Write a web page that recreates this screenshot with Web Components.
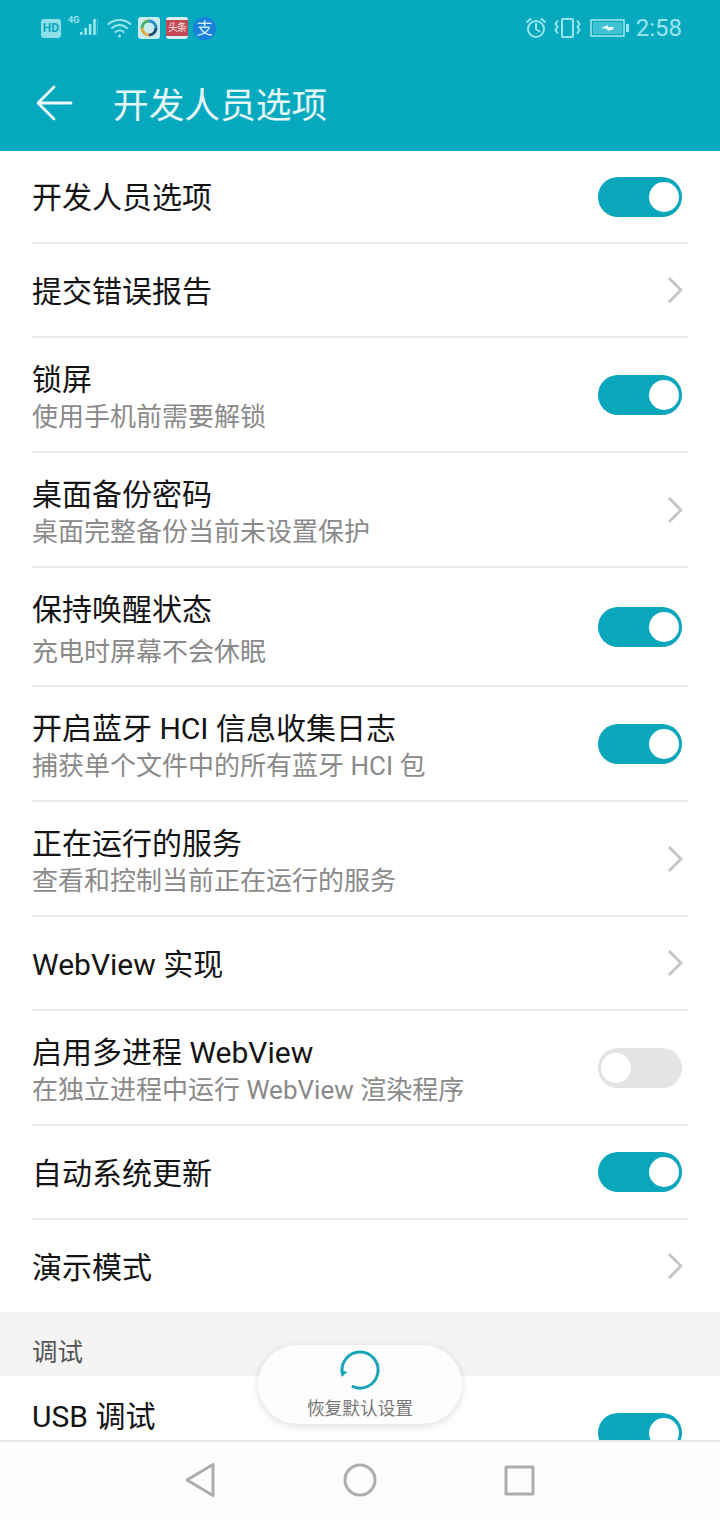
<!DOCTYPE html>
<html lang="zh">
<head>
<meta charset="utf-8">
<title>开发人员选项</title>
<style>
  html, body { margin: 0; padding: 0; background: #fff; }
  body { font-family: Roboto, "Noto Sans CJK SC", sans-serif; }
</style>
</head>
<body>
<settings-screen>
  <app-header slot="top">开发人员选项</app-header>

  <settings-row h="93"><span>开发人员选项</span><app-switch slot="end" on></app-switch></settings-row>
  <settings-row h="94"><span>提交错误报告</span><app-chevron slot="end"></app-chevron></settings-row>
  <settings-row h="115"><span>锁屏</span><span slot="sub">使用手机前需要解锁</span><app-switch slot="end" on></app-switch></settings-row>
  <settings-row h="115"><span>桌面备份密码</span><span slot="sub">桌面完整备份当前未设置保护</span><app-chevron slot="end"></app-chevron></settings-row>
  <settings-row h="119" gap="8" pad="7"><span>保持唤醒状态</span><span slot="sub">充电时屏幕不会休眠</span><app-switch slot="end" on></app-switch></settings-row>
  <settings-row h="115"><span>开启蓝牙 HCI 信息收集日志</span><span slot="sub">捕获单个文件中的所有蓝牙 HCI 包</span><app-switch slot="end" on></app-switch></settings-row>
  <settings-row h="115"><span>正在运行的服务</span><span slot="sub">查看和控制当前正在运行的服务</span><app-chevron slot="end"></app-chevron></settings-row>
  <settings-row h="94"><span>WebView 实现</span><app-chevron slot="end"></app-chevron></settings-row>
  <settings-row h="115"><span>启用多进程 WebView</span><span slot="sub">在独立进程中运行 WebView 渲染程序</span><app-switch slot="end"></app-switch></settings-row>
  <settings-row h="94"><span>自动系统更新</span><app-switch slot="end" on></app-switch></settings-row>
  <settings-row h="92" last><span>演示模式</span><app-chevron slot="end"></app-chevron></settings-row>
  <settings-section>调试</settings-section>
  <settings-row h="113" gap="0" pad="0" last><span>USB 调试</span><span slot="sub">&nbsp;</span><app-switch slot="end" on></app-switch></settings-row>

  <restore-button slot="float">恢复默认设置</restore-button>
  <nav-bar slot="bottom"></nav-bar>
</settings-screen>

<script>
class SettingsScreen extends HTMLElement {
  constructor() {
    super();
    this.attachShadow({ mode: "open" });
    this.shadowRoot.innerHTML = `
    <style>
      :host {
        display: flex;
        flex-direction: column;
        position: relative;
        width: 720px;
        height: 1520px;
        overflow: hidden;
        background: #fff;
      }
      .list {
        flex: 1;
        min-height: 0;
        overflow: hidden;
      }
    </style>
    <slot name="top"></slot>
    <div class="list"><slot></slot></div>
    <slot name="float"></slot>
    <slot name="bottom"></slot>
    `;
  }
}

class AppHeader extends HTMLElement {
  constructor() {
    super();
    this.attachShadow({ mode: "open" });
    this.shadowRoot.innerHTML = `
    <style>
      :host {
        display: block;
        height: 151px;
        background: #06a9be;
        color: #e4f7f9;
      }
      .toolbar {
        display: flex;
        align-items: center;
        height: 95px;
        padding-left: 36px;
        gap: 40px;
      }
      .toolbar svg { width: 37px; height: 38px; flex: none; margin-top: -2px; }
      .name { font-size: 35.700px; font-weight: 400; margin-top: -3px; }
    </style>
    <status-bar></status-bar>
    <div class="toolbar">
      <svg viewBox="0 0 37 38" fill="none" stroke="#eefafb" stroke-width="2.800" stroke-linecap="round" stroke-linejoin="round">
        <path d="M35 19H3M18 3 2 19l16 16"/>
      </svg>
      <span class="name"><slot></slot></span>
    </div>
    `;
  }
}

class StatusBar extends HTMLElement {
  constructor() {
    super();
    this.attachShadow({ mode: "open" });
    this.shadowRoot.innerHTML = `
    <style>
      :host {
        display: flex;
        align-items: center;
        justify-content: space-between;
        height: 56px;
        padding: 0 38px 0 41px;
        color: #9be6ee;
      }
      .group { display: flex; align-items: center; }
      .hd {
        width: 20px; height: 19px;
        border-radius: 3px;
        background: #8fdfe8;
        color: #06a9be;
        font: 700 12px/19px Roboto, sans-serif;
        text-align: center;
      }
      .sig { position: relative; width: 30px; height: 22px; margin-left: 7px; }
      .sig b {
        position: absolute; left: 0; top: -2px;
        font: 700 9px/10px Roboto, sans-serif;
      }
      .sig svg { position: absolute; left: 12px; top: 1px; }
      .wifi { margin-left: 9px; }
      .tile {
        width: 22px; height: 22px;
        border-radius: 3px;
        margin-left: 6px;
        display: flex; align-items: center; justify-content: center;
      }
      .news { background: #c9ecef; }
      .toutiao {
        background: #c64a55;
        border-top: 3px solid #d8f0f3;
        border-bottom: 3px solid #d8f0f3;
        height: 16px;
        color: #fbe3e3;
        font-size: 10px;
        line-height: 16px;
        letter-spacing: -1px;
      }
      .ali {
        background: #1b7fdc;
        border-radius: 50%;
        width: 23px; height: 23px;
        margin-left: 5px;
        color: #d6efff;
        font-size: 16px;
        line-height: 23px;
      }
      .time { font-size: 24px; margin-left: 6px; font-weight: 400; }
      .vib { margin-left: 7px; }
      .bat { margin-left: 9px; }
    </style>
    <div class="group">
      <span class="hd">HD</span>
      <span class="sig"><b>4G</b>
        <svg width="18" height="20" viewBox="0 0 18 20" fill="#9be6ee">
          <rect x="0" y="14" width="2.6" height="3"/>
          <rect x="4.4" y="10" width="2.6" height="7"/>
          <rect x="8.8" y="6" width="2.6" height="11"/>
          <rect x="13.2" y="1" width="2.6" height="16"/>
          <rect x="16.8" y="0" width="1" height="18" opacity=".4"/>
        </svg>
      </span>
      <svg class="wifi" width="25" height="22" viewBox="0 0 25 22" fill="none" stroke="#9be6ee" stroke-width="2" stroke-linecap="round">
        <path d="M1.5 7C7.5 1.5 17.5 1.5 23.5 7M5 11c4.500-4 10.500-4 15 0M8.500 15c2.300-2 5.700-2 8 0"/>
        <circle cx="12.500" cy="19" r="1.500" fill="#9be6ee" stroke="none"/>
      </svg>
      <span class="tile news">
        <svg width="18" height="18" viewBox="0 0 18 18" fill="none" stroke-width="3">
          <path d="M9 2a7 7 0 0 1 7 7" stroke="#2f8fc8"/>
          <path d="M16 9a7 7 0 0 1-7 7" stroke="#24506e"/>
          <path d="M9 16a7 7 0 0 1-7-7" stroke="#e2a93b"/>
          <path d="M2 9a7 7 0 0 1 7-7" stroke="#4fb06a"/>
        </svg>
      </span>
      <span class="tile toutiao">头条</span>
      <span class="tile ali">支</span>
    </div>
    <div class="group">
      <svg width="22" height="22" viewBox="0 0 22 22" fill="none" stroke="#9be6ee" stroke-width="2" stroke-linecap="round" stroke-linejoin="round">
        <circle cx="11" cy="12" r="8"/>
        <path d="M11 7v5l3.500 2.500M2 5l3.500-3M20 5l-3.500-3"/>
      </svg>
      <svg class="vib" width="27" height="22" viewBox="0 0 27 22" fill="none" stroke="#9be6ee" stroke-width="2" stroke-linejoin="round">
        <rect x="8" y="2" width="11" height="18" rx="1"/>
        <path d="M3.500 4 1.500 7l2 3-2 3 2 3M23.500 4l2 3-2 3 2 3-2 3" stroke-linecap="round"/>
      </svg>
      <svg class="bat" width="40" height="20" viewBox="0 0 40 20">
        <rect x="1" y="2" width="33" height="16" fill="none" stroke="#9be6ee" stroke-width="1.600"/>
        <rect x="3" y="4" width="29" height="12" fill="#9be6ee" opacity=".4"/>
        <rect x="36" y="6" width="3" height="8" fill="#9be6ee"/>
        <path d="M11 10l7-3v2h6l-1 1 1 1-6 2-1-2z" fill="#e9fbfd"/>
      </svg>
      <span class="time">2:58</span>
    </div>
    `;
  }
}

class SettingsRow extends HTMLElement {
  constructor() {
    super();
    this.attachShadow({ mode: "open" });
    this.shadowRoot.innerHTML = `
    <style>
      :host {
        display: block;
        box-sizing: border-box;
        padding: 0 32px;
      }
      .row {
        box-sizing: border-box;
        height: 100%;
        display: flex;
        align-items: center;
        justify-content: space-between;
        padding-right: 6px;
        border-bottom: 2px solid #e8e8e8;
      }
      :host([last]) .row { border-bottom: none; }
      .text { display: flex; flex-direction: column; }
      .main { font-size: 30px; line-height: 36px; color: #141414; }
      .sub { font-size: 26px; line-height: 32px; color: #8a8a8a; }
    </style>
    <div class="row">
      <div class="text">
        <div class="main"><slot></slot></div>
        <div class="sub"><slot name="sub"></slot></div>
      </div>
      <slot name="end"></slot>
    </div>
    `;
  }

  connectedCallback() {
    this.style.height = this.getAttribute("h") + "px";
    const text = this.shadowRoot.querySelector(".text");
    const sub = this.shadowRoot.querySelector(".sub");
    const hasSub = this.querySelector('[slot="sub"]');
    if (!hasSub) {
      // title-only rows sit a little under the centre line
      sub.style.display = "none";
      text.style.paddingTop = "3px";
      return;
    }
    text.style.paddingTop = (this.getAttribute("pad") || 5) + "px";
    sub.style.marginTop = (this.getAttribute("gap") || 3) + "px";
  }
}

class SettingsSection extends HTMLElement {
  constructor() {
    super();
    this.attachShadow({ mode: "open" });
    this.shadowRoot.innerHTML = `
    <style>
      :host {
        display: flex;
        align-items: center;
        height: 64px;
        padding: 10px 32px 0;
        box-sizing: border-box;
        background: #f4f4f4;
        color: #555;
        font-size: 25.500px;
      }
    </style>
    <slot></slot>
    `;
  }
}

class AppSwitch extends HTMLElement {
  constructor() {
    super();
    this.attachShadow({ mode: "open" });
    this.shadowRoot.innerHTML = `
    <style>
      :host {
        display: flex;
        align-items: center;
        justify-content: flex-start;
        box-sizing: border-box;
        width: 84px;
        height: 40px;
        padding: 0 3px;
        border-radius: 20px;
        background: #e4e4e4;
      }
      :host([on]) {
        justify-content: flex-end;
        background: #0aa6bb;
      }
      .knob {
        width: 30px;
        height: 30px;
        border-radius: 50%;
        background: #fff;
      }
    </style>
    <div class="knob"></div>
    `;
  }
}

class AppChevron extends HTMLElement {
  constructor() {
    super();
    this.attachShadow({ mode: "open" });
    this.shadowRoot.innerHTML = `
    <style>
      :host { display: block; width: 16px; height: 28px; margin-right: -1px; }
      svg { display: block; }
    </style>
    <svg width="16" height="28" viewBox="0 0 16 28" fill="none" stroke="#c6c6c6" stroke-width="3">
      <path d="M2 2l12 12L2 26"/>
    </svg>
    `;
  }
}

class RestoreButton extends HTMLElement {
  constructor() {
    super();
    this.attachShadow({ mode: "open" });
    this.shadowRoot.innerHTML = `
    <style>
      :host {
        position: absolute;
        left: 258px;
        top: 1345px;
        width: 204px;
        height: 79px;
        box-sizing: border-box;
        border-radius: 40px;
        background: #fdfdfd;
        box-shadow: 0 2px 8px rgba(0, 0, 0, .14);
        display: flex;
        flex-direction: column;
        align-items: center;
        padding-top: 4px;
        color: #777;
        font-size: 17.700px;
        line-height: 24px;
      }
      svg { display: block; margin-bottom: 6px; }
    </style>
    <svg width="42" height="42" viewBox="0 0 42 42" fill="none">
      <path d="M3.500 25A18 18 0 1 1 14 37.600" stroke="#1aa5b6" stroke-width="3" stroke-linecap="round"/>
      <path d="M1.500 21l7 2-6 5z" fill="#1aa5b6"/>
    </svg>
    <slot></slot>
    `;
  }
}

class NavBar extends HTMLElement {
  constructor() {
    super();
    this.attachShadow({ mode: "open" });
    this.shadowRoot.innerHTML = `
    <style>
      :host {
        display: flex;
        align-items: center;
        justify-content: space-between;
        box-sizing: border-box;
        position: relative;
        height: 80px;
        padding: 0 185px 2px 184px;
        background: #fdfdfd;
        border-top: 2px solid #e6e6e6;
      }
      svg { display: block; }
    </style>
    <svg width="32" height="36" viewBox="0 0 32 36" fill="none" stroke="#adadad" stroke-width="3" stroke-linejoin="round">
      <path d="M29 2.500V33.500L3 18z"/>
    </svg>
    <svg width="34" height="34" viewBox="0 0 34 34" fill="none" stroke="#adadad" stroke-width="3">
      <circle cx="17" cy="17" r="15"/>
    </svg>
    <svg width="31" height="31" viewBox="0 0 31 31" fill="none" stroke="#adadad" stroke-width="3" stroke-linejoin="round">
      <rect x="2" y="2" width="27" height="27"/>
    </svg>
    `;
  }
}

customElements.define("settings-screen", SettingsScreen);
customElements.define("app-header", AppHeader);
customElements.define("status-bar", StatusBar);
customElements.define("settings-row", SettingsRow);
customElements.define("settings-section", SettingsSection);
customElements.define("app-switch", AppSwitch);
customElements.define("app-chevron", AppChevron);
customElements.define("restore-button", RestoreButton);
customElements.define("nav-bar", NavBar);
</script>
</body>
</html>
